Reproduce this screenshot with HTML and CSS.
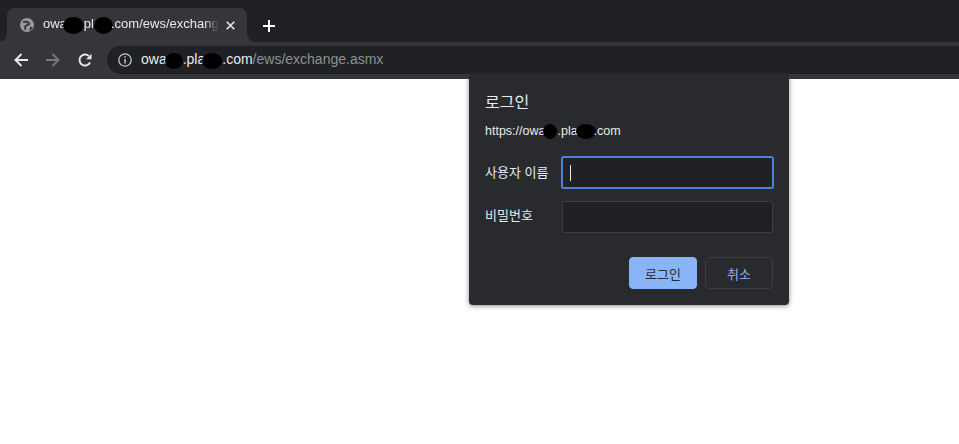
FILE: index.html
```html
<!DOCTYPE html>
<html lang="ko">
<head>
<meta charset="utf-8">
<title>로그인</title>
<link rel="stylesheet" href="styles.css">
</head>
<body>
<div class="browser">
  <div class="tabstrip">
    <div class="tab">
      <svg class="globe" width="14" height="14" viewBox="0 0 16 16"><circle cx="8" cy="8" r="8" fill="#9a9b9e"/><path d="M3.500 4.800C6 3.800 8.500 4.500 9.800 5.500 11.300 6.500 10 8 8 8.300 5.800 8.700 5 10.500 6.500 13.500M11.500 10.500L13 11.500 11 14" fill="none" stroke="#35363a" stroke-width="2.200"/></svg>
      <span class="tab-title">owa<i class="blot tb1"></i>pl<i class="blot tb2"></i>.com/ews/exchange.asmx</span>
      <svg class="close" width="9" height="9" viewBox="0 0 9 9"><path d="M.7.7l7.600 7.600M8.300.7L.7 8.300" stroke="#e8eaed" stroke-width="1.600"/></svg>
    </div>
    <svg class="newtab" width="12" height="12" viewBox="0 0 12 12"><path d="M6 0v12M0 6h12" stroke="#fff" stroke-width="2"/></svg>
  </div>
  <div class="toolbar">
    <svg class="nav" width="14" height="14" viewBox="0 0 14 14"><path d="M14 7H2M7.500 1L1.500 7l6 6" fill="none" stroke="#e8eaed" stroke-width="1.900"/></svg>
    <svg class="nav" width="14" height="14" viewBox="0 0 14 14"><path d="M0 7h12M6.500 1l6 6-6 6" fill="none" stroke="#77787b" stroke-width="1.900"/></svg>
    <svg class="nav" width="14" height="14" viewBox="0 0 14 14"><path d="M12 9.500A5.500 5.500 0 1 1 10.900 3.100" fill="none" stroke="#e8eaed" stroke-width="1.900"/><path d="M13.500 .8v5.400H8.100z" fill="#e8eaed"/></svg>
    <div class="omnibox">
      <svg class="info" width="14" height="14" viewBox="0 0 14 14"><circle cx="7" cy="7" r="6.200" fill="none" stroke="#c4c6c9" stroke-width="1.300"/><path d="M7 6v4.500M7 3.300v1.500" stroke="#c4c6c9" stroke-width="1.500"/></svg>
      <span class="url"><span class="host">owa<i class="blot ub1"></i>.pla<i class="blot ub2"></i>.com</span>/ews/exchange.asmx</span>
    </div>
  </div>
</div>
<div class="dialog">
  <div class="dialog-title">로그인</div>
  <div class="origin">https://owa<i class="blot ob1"></i>.pla<i class="blot ob2"></i>.com</div>
  <div class="fields">
    <label class="label">사용자 이름</label>
    <div class="input focused"><span class="caret"></span></div>
    <label class="label label-pw">비밀번호</label>
    <div class="input"></div>
  </div>
  <div class="actions">
    <button class="btn primary">로그인</button>
    <button class="btn">취소</button>
  </div>
</div>
</body>
</html>
```
FILE: styles.css
```css
* { box-sizing: border-box; }
html, body { margin: 0; height: 100%; background: #fff; overflow: hidden; }
body { font-family: "Liberation Sans", "Noto Sans CJK KR", sans-serif; position: relative; }
.browser { background: #202124; height: 79px; display: flex; flex-direction: column; }
.tabstrip { height: 42px; padding: 8px 0 0 7px; display: flex; align-items: flex-start; background: #202124; }
.tab { position: relative; width: 240px; height: 34px; background: #35363a; border-radius: 8px 8px 0 0; display: flex; align-items: center; padding: 0 12px 0 13px; color: #e8eaed; font-size: 13px; }
.tab::before, .tab::after { content: ""; position: absolute; bottom: 0; width: 8px; height: 8px; }
.tab::before { left: -8px; background: radial-gradient(circle at 0 0, #202124 7.500px, #35363a 8px); }
.tab::after { right: -8px; background: radial-gradient(circle at 100% 0, #202124 7.500px, #35363a 8px); }
.globe { flex: none; margin-right: 9px; }
.tab-title { flex: 1; overflow: hidden; white-space: nowrap; -webkit-mask-image: linear-gradient(90deg, #000 92%, transparent); mask-image: linear-gradient(90deg, #000 92%, transparent); }
.close { flex: none; margin: 0 0 0 7px; }
.newtab { margin: 12px 0 0 16px; flex: none; }
.toolbar { height: 37px; background: #35363a; display: flex; align-items: center; padding: 0 0 1px 14px; }
.nav { flex: none; margin-right: 18px; }
.omnibox { flex: 1; height: 28px; background: #202124; border-radius: 14px 0 0 14px; margin-left: -3px; display: flex; align-items: center; padding-left: 11px; }
.info { flex: none; margin-right: 9px; }
.url { font-size: 14px; color: #8f9094; white-space: nowrap; }
.host { color: #e8eaed; }
.blot { display: inline-block; background: #000; border-radius: 50%; vertical-align: middle; height: 16px; }
.tb1 { width: 21px; height: 17px; margin-left: -4px; }
.tb2 { width: 19px; height: 17px; margin-right: -2px; }
.ub1 { width: 18px; margin-left: -2px; }
.ub2 { width: 20px; margin-left: -3px; }
.ob1 { width: 14px; margin-left: -2px; height: 15px; }
.ob2 { width: 20px; margin-left: -2px; margin-right: -2px; height: 15px; }
.dialog { position: absolute; left: 469px; top: 74px; width: 320px; height: 231px; background: #292a2d; border-radius: 0 0 4px 4px; box-shadow: 0 1px 5px rgba(60,64,67,.6); padding: 19px 16px 16px; color: #e8eaed; }
.dialog-title { font-size: 16px; line-height: 20px; }
.origin { font-size: 12.500px; line-height: 16px; margin-top: 10px; }
.fields { display: grid; grid-template-columns: 77px 211px; row-gap: 12px; margin-top: 17px; align-items: center; width: 288px; }
.label { font-size: 13px; line-height: 16px; }
.label-pw { margin-bottom: 2px; }
.input { height: 32px; background: #202124; border: 1px solid #3c3e41; border-radius: 2px; display: flex; align-items: center; padding-left: 7px; }
.input.focused { height: 33px; margin: 0 -1px; border: 2px solid #4a82e0; border-radius: 3px; }
.caret { width: 1px; height: 16px; background: #e8eaed; }
.actions { display: flex; justify-content: flex-end; gap: 8px; margin-top: 24px; }
.btn { width: 68px; height: 32px; border: 1px solid #3c3e41; border-radius: 4px; background: transparent; color: #8ab4f8; font: 13px "Liberation Sans", "Noto Sans CJK KR", sans-serif; padding: 0; }
.btn.primary { background: #8ab4f8; border-color: #8ab4f8; color: #292a2d; }
```
